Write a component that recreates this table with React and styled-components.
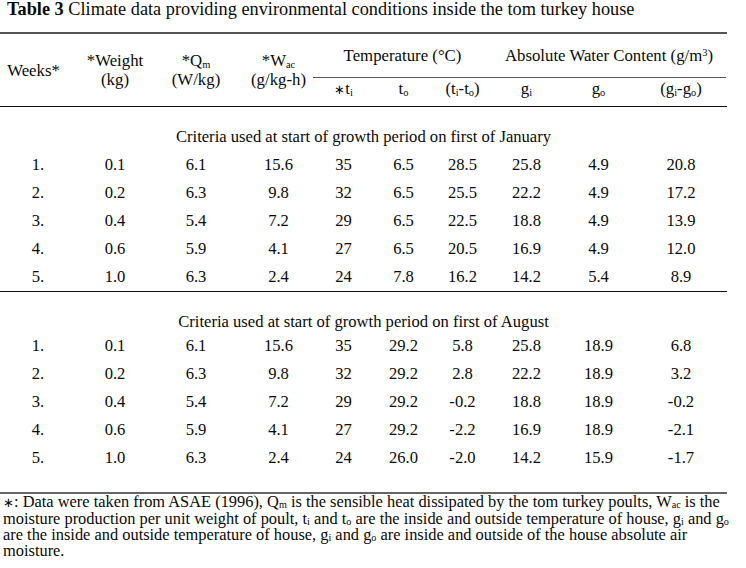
import React from 'react';
import styled, { createGlobalStyle } from 'styled-components';

const COLS = '76px 78px 84px 75px 61px 59px 59px 69px 75px 90px';

const january = [
  ['1.', '0.1', '6.1', '15.6', '35', '6.5', '28.5', '25.8', '4.9', '20.8'],
  ['2.', '0.2', '6.3', '9.8', '32', '6.5', '25.5', '22.2', '4.9', '17.2'],
  ['3.', '0.4', '5.4', '7.2', '29', '6.5', '22.5', '18.8', '4.9', '13.9'],
  ['4.', '0.6', '5.9', '4.1', '27', '6.5', '20.5', '16.9', '4.9', '12.0'],
  ['5.', '1.0', '6.3', '2.4', '24', '7.8', '16.2', '14.2', '5.4', '8.9'],
];

const august = [
  ['1.', '0.1', '6.1', '15.6', '35', '29.2', '5.8', '25.8', '18.9', '6.8'],
  ['2.', '0.2', '6.3', '9.8', '32', '29.2', '2.8', '22.2', '18.9', '3.2'],
  ['3.', '0.4', '5.4', '7.2', '29', '29.2', '-0.2', '18.8', '18.9', '-0.2'],
  ['4.', '0.6', '5.9', '4.1', '27', '29.2', '-2.2', '16.9', '18.9', '-2.1'],
  ['5.', '1.0', '6.3', '2.4', '24', '26.0', '-2.0', '14.2', '15.9', '-1.7'],
];

const GlobalStyle = createGlobalStyle`
  html, body {
    margin: 0;
    padding: 0;
    background: #fff;
  }
  body {
    font-family: "Liberation Serif", "Times New Roman", serif;
    color: #0a0a0a;
  }
`;

const Page = styled.div`
  width: 746px;
  height: 568px;
  overflow: hidden;
  background: #fff;
`;

const Caption = styled.div`
  padding-left: 7px;
  font-size: 18.3px;
  line-height: 18px;
  white-space: nowrap;
  b {
    font-weight: bold;
  }
`;

const Table = styled.div`
  width: 727px;
  margin-top: 14px;
  border-top: 2px solid #555;
`;

const Head = styled.div`
  display: grid;
  grid-template-columns: ${COLS};
  grid-template-rows: 44px 28px;
  border-bottom: 1px solid #111;
  font-size: 16.8px;
`;

const HeadCell = styled.div`
  grid-row: 1 / 3;
  display: flex;
  flex-direction: column;
  align-items: center;
  justify-content: center;
  line-height: 19px;
  text-align: center;
  padding: ${(p) => p.$pad || '0'};
`;

const GroupHead = styled.div`
  grid-row: 1;
  grid-column: ${(p) => p.$span};
  display: flex;
  align-items: center;
  justify-content: center;
  box-sizing: border-box;
  border-bottom: 1px solid #555;
  line-height: 18px;
`;

const SubHead = styled.div`
  grid-row: 2;
  grid-column: ${(p) => p.$col};
  display: flex;
  align-items: center;
  justify-content: center;
  padding-bottom: 6px;
  line-height: 18px;
`;

const Star = styled.span`
  font-size: 0.8em;
`;

const Sub = styled.sub`
  font-size: 0.62em;
  vertical-align: ${(p) => (p.$low ? '-0.2em' : '-0.08em')};
  line-height: 0;
`;

const Sup = styled.sup`
  font-size: 0.62em;
  vertical-align: 0.5em;
  line-height: 0;
`;

const Section = styled.div`
  padding-top: 18px;
  padding-bottom: ${(p) => p.$bottom}px;
  border-bottom: ${(p) => (p.$last ? '2px solid #666' : '1px solid #111')};
`;

const Criteria = styled.div`
  font-size: 16.6px;
  line-height: 24px;
  text-align: center;
  white-space: nowrap;
  margin-bottom: ${(p) => p.$after}px;
`;

const Row = styled.div`
  display: grid;
  grid-template-columns: ${COLS};
  height: 28px;
  align-items: center;
  font-size: 16.6px;
`;

const Cell = styled.div`
  text-align: center;
  padding-left: ${(p) => p.$shift || 0}px;
`;

const Note = styled.div`
  padding: 0 0 0 3px;
  font-size: 16.4px;
  line-height: 16px;
  white-space: nowrap;
`;

function DataRows({ rows }) {
  return rows.map((r) => (
    <Row key={r[0]}>
      {r.map((v, i) => (
        <Cell key={i} $shift={i === 3 ? 6 : 0}>
          {v}
        </Cell>
      ))}
    </Row>
  ));
}

export default function App() {
  return (
    <Page>
      <GlobalStyle />
      <Caption>
        <b>Table 3</b> Climate data providing environmental conditions inside the tom turkey house
      </Caption>

      <Table>
        <Head>
          <HeadCell $pad="0 9px 0 0">Weeks*</HeadCell>
          <HeadCell>
            <span>*Weight</span>
            <span>(kg)</span>
          </HeadCell>
          <HeadCell>
            <span>*Q<Sub $low>m</Sub></span>
            <span>(W/kg)</span>
          </HeadCell>
          <HeadCell $pad="0 0 0 6px">
            <span>*W<Sub $low>ac</Sub></span>
            <span>(g/kg-h)</span>
          </HeadCell>
          <GroupHead $span="5 / 8">Temperature (°C)</GroupHead>
          <GroupHead $span="8 / 11">
            <span>Absolute Water Content (g/m<Sup>3</Sup>)</span>
          </GroupHead>
          <SubHead $col={5}>
            <span><Star>∗</Star>t<Sub $low>i</Sub></span>
          </SubHead>
          <SubHead $col={6}>
            <span>t<Sub $low>o</Sub></span>
          </SubHead>
          <SubHead $col={7}>
            <span>(t<Sub $low>i</Sub>-t<Sub $low>o</Sub>)</span>
          </SubHead>
          <SubHead $col={8}>
            <span>g<Sub $low>i</Sub></span>
          </SubHead>
          <SubHead $col={9}>
            <span>g<Sub $low>o</Sub></span>
          </SubHead>
          <SubHead $col={10}>
            <span>(g<Sub $low>i</Sub>-g<Sub $low>o</Sub>)</span>
          </SubHead>
        </Head>

        <Section $bottom={0}>
          <Criteria $after={2}>Criteria used at start of growth period on first of January</Criteria>
          <DataRows rows={january} />
        </Section>

        <Section $bottom={20} $last>
          <Criteria $after={-2}>Criteria used at start of growth period on first of August</Criteria>
          <DataRows rows={august} />
        </Section>
      </Table>

      <Note>
        <Star>∗</Star>: Data were taken from ASAE (1996), Q<Sub>m</Sub> is the sensible heat dissipated by the tom turkey poults, W<Sub>ac</Sub> is the
        <br />
        moisture production per unit weight of poult, t<Sub>i</Sub> and t<Sub>o</Sub> are the inside and outside temperature of house, g<Sub>i</Sub> and g<Sub>o</Sub>
        <br />
        are the inside and outside temperature of house, g<Sub>i</Sub> and g<Sub>o</Sub> are inside and outside of the house absolute air
        <br />
        moisture.
      </Note>
    </Page>
  );
}
